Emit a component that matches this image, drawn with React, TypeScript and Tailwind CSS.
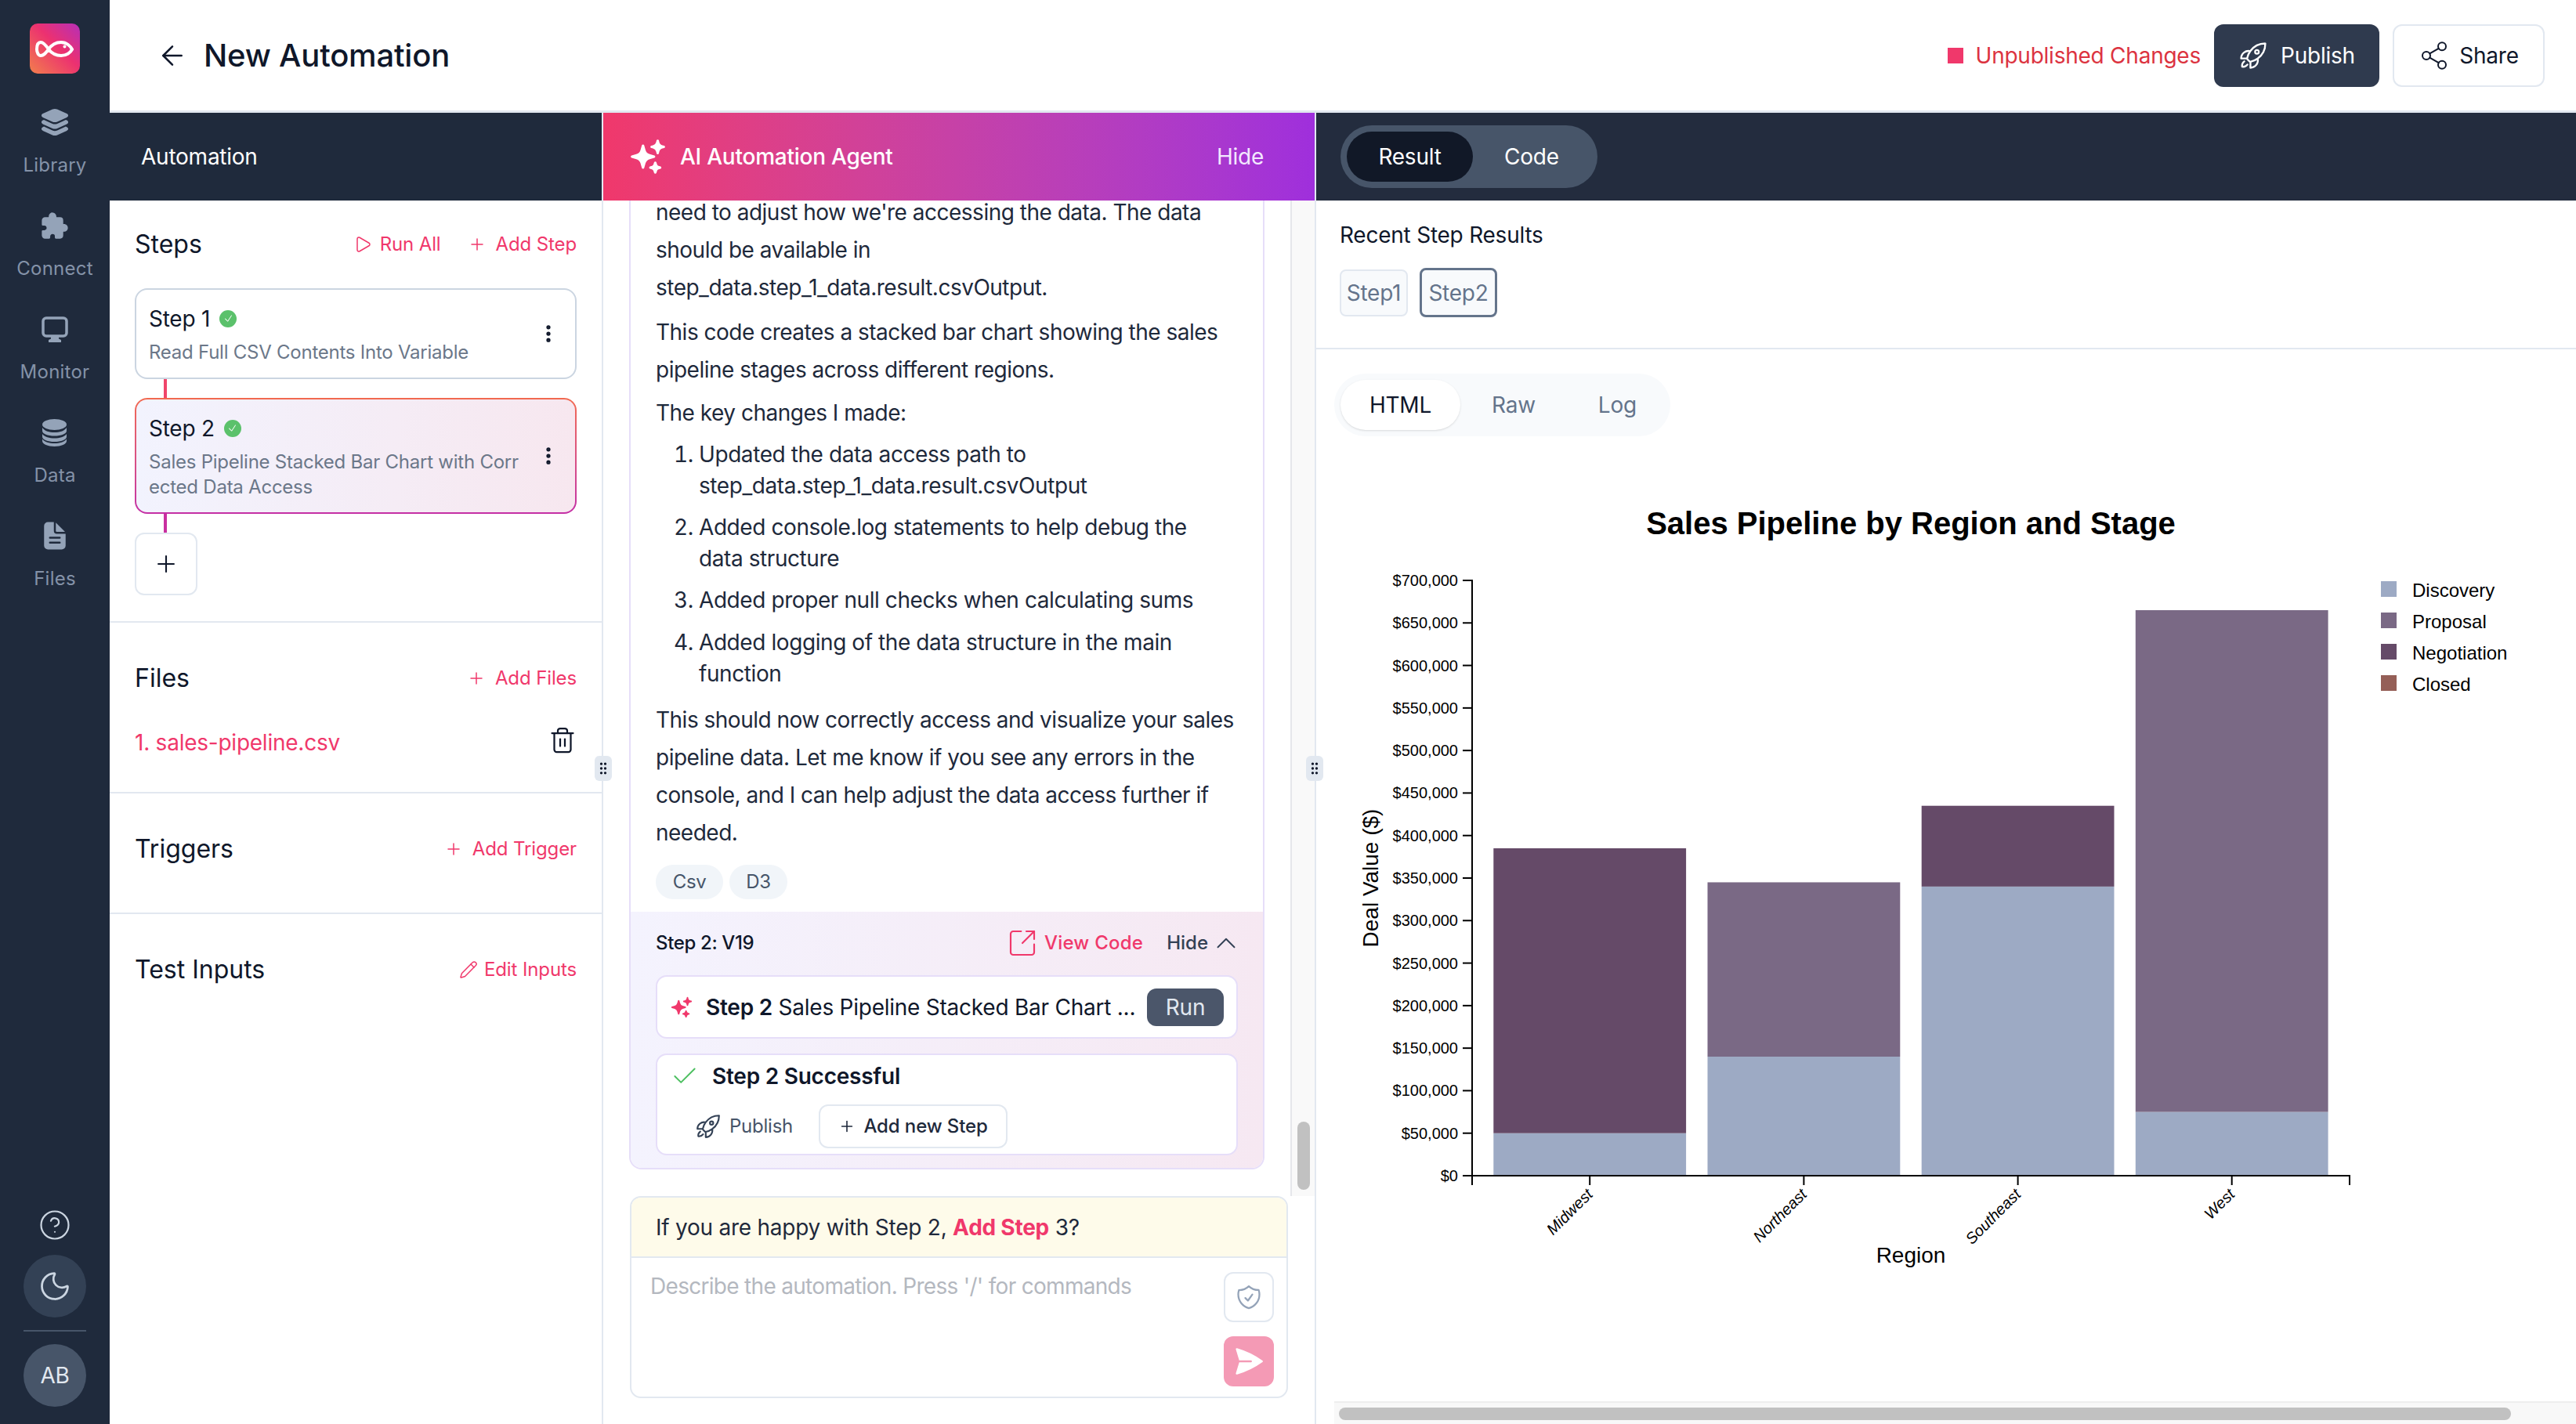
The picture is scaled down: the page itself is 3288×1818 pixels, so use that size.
import React from "react";
import {
  ArrowLeft,
  Check,
  ChevronUp,
  EllipsisVertical,
  GripVertical,
  Moon,
  Pencil,
  Play,
  Plus,
  Share2,
  SquareArrowOutUpRight,
  Trash2,
  CircleHelp,
} from "lucide-react";
import { IoExtensionPuzzle, IoLayers, IoDocumentText } from "react-icons/io5";
import { HiOutlineRocketLaunch, HiOutlineShieldCheck, HiPaperAirplane, HiSparkles, HiCheck } from "react-icons/hi2";

const SANS = "font-['Inter','Noto_Sans',sans-serif] tracking-[-0.015em]";

const Logo = () => (
  <svg width="64" height="64" viewBox="0 0 64 64">
    <defs>
      <linearGradient id="logo" x1="0" y1="1" x2="1" y2="0">
        <stop offset="0" stopColor="#f27f4c" />
        <stop offset="0.55" stopColor="#ec3170" />
        <stop offset="1" stopColor="#b62fb8" />
      </linearGradient>
    </defs>
    <rect width="64" height="64" rx="10" fill="url(#logo)" />
    <path
      d="M24 33C28 27 34 24 40 24C47 24 52 29 54 33C52 37 47 41 40 41C34 41 28 38 24 33C20 27 17 24 14 24C10 24 9 29 9 33C9 37 11 41 14 41C18 41 20 38 24 33Z"
      fill="none"
      stroke="#fff"
      strokeWidth="4"
    />
    <circle cx="44.5" cy="29.5" r="2" fill="#fff" />
  </svg>
);

const MonitorIcon = () => (
  <svg width="34" height="33" viewBox="0 0 34 33" fill="currentColor">
    <rect x="2" y="2" width="30" height="23" rx="4" fill="none" stroke="currentColor" strokeWidth="3.5" />
    <path d="M12 26H22V28.5L25 30V33H9V30L12 28.5Z" />
  </svg>
);

const DataIcon = () => (
  <svg width="31" height="35" viewBox="0 0 31 35" fill="currentColor">
    <ellipse cx="15.5" cy="7" rx="15.5" ry="7" />
    <path d="M0 11C3 15.5 9 17 15.5 17S28 15.5 31 11V15C31 19 24 21.5 15.5 21.5S0 19 0 15Z" />
    <path d="M0 19C3 23 9 24.5 15.5 24.5S28 23 31 19V22.5C31 26.5 24 29 15.5 29S0 26.5 0 22.5Z" />
    <path d="M0 25.5C3 29.5 9 31 15.5 31S28 29.5 31 25.5V28C31 32 24 35 15.5 35S0 32 0 28Z" />
  </svg>
);

const NavItem = ({ icon, label }: { icon: React.ReactNode; label: string }) => (
  <div className="flex flex-col items-center">
    <div className="flex h-[40px] items-center justify-center text-[#94a3b8]">{icon}</div>
    <span className="mt-[19px] text-[24px] leading-[32px] tracking-[0.01em] text-[#8492a8]">{label}</span>
  </div>
);

const Sidebar = () => (
  <aside className="flex w-[140px] shrink-0 flex-col items-center bg-[#1f2a3c] pt-[30px] pb-[22px]">
    <Logo />
    <div className="mt-[42px] flex flex-col items-center gap-[41px]">
      <NavItem icon={<IoLayers size={42} />} label="Library" />
      <NavItem icon={<IoExtensionPuzzle size={38} />} label="Connect" />
      <NavItem icon={<MonitorIcon />} label="Monitor" />
      <NavItem icon={<DataIcon />} label="Data" />
      <NavItem icon={<IoDocumentText size={40} />} label="Files" />
    </div>
    <div className="mt-auto flex flex-col items-center">
      <CircleHelp size={42} strokeWidth={1.25} className="text-[#cbd5e1]" />
      <div className="mt-[17px] flex h-[80px] w-[80px] items-center justify-center rounded-full bg-[#334155]">
        <Moon size={44} strokeWidth={1.5} className="text-[#cbd5e1]" />
      </div>
      <div className="my-[16px] h-[2px] w-[80px] bg-[#475569]" />
      <div className="flex h-[80px] w-[80px] items-center justify-center rounded-full bg-[#475569] text-[28px] text-[#e2e8f0]">
        AB
      </div>
    </div>
  </aside>
);

const Header = () => (
  <header className="flex h-[144px] shrink-0 items-center border-b-[3px] border-[#e2e8f0] bg-white pl-[60px] pr-[40px]">
    <ArrowLeft size={40} strokeWidth={1.5} className="text-[#0f172a]" />
    <h1 className="ml-[20px] text-[40px] font-medium tracking-[-0.005em] text-[#0f172a]">New Automation</h1>
    <div className="ml-auto flex items-center">
      <span className="h-[20px] w-[20px] bg-[#f0386b]" />
      <span className="ml-[16px] text-[28px] text-[#dc3340]">Unpublished Changes</span>
      <button className="ml-[17px] flex h-[80px] w-[211px] items-center justify-center gap-[16px] rounded-[12px] bg-[#2f3a4e] text-[28px] text-white">
        <HiOutlineRocketLaunch size={38} /> Publish
      </button>
      <button className="ml-[17px] flex h-[80px] w-[194px] items-center justify-center gap-[12px] rounded-[12px] border-2 border-[#e2e8f0] bg-white text-[28px] text-[#0f172a]">
        <Share2 size={40} strokeWidth={1.2} /> Share
      </button>
    </div>
  </header>
);

const SectionHead = ({ title, action }: { title: string; action: React.ReactNode }) => (
  <div className="flex items-center justify-between">
    <h3 className="text-[32px] leading-[44px] tracking-normal text-[#0f172a]">{title}</h3>
    <div className="flex items-center text-[24px] tracking-[-0.005em] text-[#f0386b]">{action}</div>
  </div>
);

const GreenCheck = () => (
  <span className="ml-[12px] flex h-[22px] w-[22px] items-center justify-center rounded-full bg-[#5bc16b] text-white">
    <HiCheck size={13} />
  </span>
);

const LeftPanel = () => (
  <section className="flex w-[630px] shrink-0 flex-col border-r-2 border-[#e2e8f0] bg-white">
    <div className="flex h-[112px] shrink-0 items-center bg-[#1f2a3c] pl-[40px] text-[28px] text-white">Automation</div>
    <div className="px-[32px] pt-[34px] pb-[33px]">
      <SectionHead
        title="Steps"
        action={
          <>
            <Play size={24} strokeWidth={1.5} />
            <span className="ml-[10px]">Run All</span>
            <Plus size={24} strokeWidth={1.5} className="ml-[34px]" />
            <span className="ml-[12px]">Add Step</span>
          </>
        }
      />
      <div className="mt-[34px] flex h-[116px] items-center justify-between rounded-[16px] border-2 border-[#cbd5e1] bg-white pl-[16px] pr-[20px]">
        <div>
          <div className="flex items-center text-[28px] leading-[40px] text-[#0f172a]">
            Step 1 <GreenCheck />
          </div>
          <p className="mt-[7px] text-[24px] leading-[32px] text-[#6b7789]">Read Full CSV Contents Into Variable</p>
        </div>
        <EllipsisVertical size={28} strokeWidth={2.5} className="text-[#0f172a]" />
      </div>
      <div className="ml-[37px] h-[24px] w-[4px] bg-[#f0456a]" />
      <div className="rounded-[16px] bg-gradient-to-b from-[#f2694f] to-[#c42fa5] p-[2px]">
        <div className="flex h-[144px] items-center justify-between rounded-[14px] bg-gradient-to-r from-[#f2f3fe] to-[#f7e7ef] pl-[16px] pr-[20px]">
          <div>
            <div className="flex items-center text-[28px] leading-[40px] text-[#0f172a]">
              Step 2 <GreenCheck />
            </div>
            <p className="mt-[7px] text-[24px] leading-[32px] text-[#6b7789]">
              Sales Pipeline Stacked Bar Chart with Corr
              <br />
              ected Data Access
            </p>
          </div>
          <EllipsisVertical size={28} strokeWidth={2.5} className="text-[#0f172a]" />
        </div>
      </div>
      <div className="ml-[37px] h-[24px] w-[4px] bg-[#c92fa0]" />
      <div className="flex h-[80px] w-[80px] items-center justify-center rounded-[12px] border-2 border-[#e2e8f0]">
        <Plus size={34} strokeWidth={1.5} className="text-[#0f172a]" />
      </div>
    </div>
    <div className="h-[218px] border-t-2 border-[#e2e8f0] px-[32px] pt-[49px]">
      <SectionHead
        title="Files"
        action={
          <>
            <Plus size={24} strokeWidth={1.5} />
            <span className="ml-[12px]">Add Files</span>
          </>
        }
      />
      <div className="mt-[39px] flex items-center justify-between">
        <span className="text-[28px] text-[#f0386b]">1. sales-pipeline.csv</span>
        <Trash2 size={36} strokeWidth={1.5} className="-translate-y-[3px] text-[#0f172a]" />
      </div>
    </div>
    <div className="h-[154px] border-t-2 border-[#e2e8f0] px-[32px] pt-[49px]">
      <SectionHead
        title="Triggers"
        action={
          <>
            <Plus size={24} strokeWidth={1.5} />
            <span className="ml-[12px]">Add Trigger</span>
          </>
        }
      />
    </div>
    <div className="flex-1 border-t-2 border-[#e2e8f0] px-[32px] pt-[49px]">
      <SectionHead
        title="Test Inputs"
        action={
          <>
            <Pencil size={24} strokeWidth={1.5} />
            <span className="ml-[8px]">Edit Inputs</span>
          </>
        }
      />
    </div>
  </section>
);

const ChatPanel = () => (
  <section className="flex w-[908px] shrink-0 flex-col bg-white">
    <div className="flex h-[112px] shrink-0 items-center justify-between bg-gradient-to-r from-[#f0386b] to-[#9f2fdc] pl-[32px] pr-[65px] text-white">
      <div className="flex items-center gap-[16px] text-[28px] font-medium">
        <HiSparkles size={50} /> AI Automation Agent
      </div>
      <span className="text-[28px] text-[#f3e8ff]">Hide</span>
    </div>
    <div className="flex min-h-0 flex-1">
      <div className="min-w-0 flex-1 overflow-hidden pl-[33px] pr-[33px]">
        <div className="-mt-[9px] rounded-b-[16px] border-x-2 border-b-2 border-[#e6def9]">
          <div className="pl-[32px] pr-[18px] text-[28px] tracking-[-0.018em] text-[#1e293b]">
            <p className="mb-[9px] leading-[48px]">
              need to adjust how we're accessing the data. The data
              <br />
              should be available in
              <br />
              step_data.step_1_data.result.csvOutput.
            </p>
            <p className="mb-[7px] leading-[48px]">
              This code creates a stacked bar chart showing the sales
              <br />
              pipeline stages across different regions.
            </p>
            <p className="mb-[9px] leading-[48px]">The key changes I made:</p>
            <ol className="mb-[15px] list-decimal pl-[55px] leading-[40px] tracking-[-0.015em]">
              <li className="mb-[13px]">
                Updated the data access path to
                <br />
                step_data.step_1_data.result.csvOutput
              </li>
              <li className="mb-[13px]">
                Added console.log statements to help debug the
                <br />
                data structure
              </li>
              <li className="mb-[14px]">Added proper null checks when calculating sums</li>
              <li>
                Added logging of the data structure in the main
                <br />
                function
              </li>
            </ol>
            <p className="leading-[48px]">
              This should now correctly access and visualize your sales
              <br />
              pipeline data. Let me know if you see any errors in the
              <br />
              console, and I can help adjust the data access further if
              <br />
              needed.
            </p>
            <div className="mt-[17px] flex gap-[8px] pb-[16px] tracking-[-0.015em]">
              <span className="flex h-[44px] w-[86px] items-center justify-center rounded-full bg-[#f1f5f9] text-[24px] text-[#475569]">Csv</span>
              <span className="flex h-[44px] w-[74px] items-center justify-center rounded-full bg-[#f1f5f9] text-[24px] text-[#475569]">D3</span>
            </div>
          </div>
          <div className="rounded-b-[14px] bg-gradient-to-r from-[#f4f3fe] to-[#f6e8f2] px-[32px] pt-[22px] pb-[16px]">
            <div className="flex h-[36px] items-center text-[24px] tracking-normal">
              <span className="font-medium tracking-[-0.015em] text-[#0f172a]">Step 2: V19</span>
              <SquareArrowOutUpRight size={40} strokeWidth={1.3} className="-mr-[2px] ml-auto text-[#f0386b]" />
              <span className="ml-[10px] font-medium tracking-[0.01em] text-[#f0386b]">View Code</span>
              <span className="ml-[30px] font-medium text-[#334155]">Hide</span>
              <ChevronUp size={42} strokeWidth={1.1} className="-mr-[6px] ml-[2px] text-[#334155]" />
            </div>
            <div className="mt-[23px] flex h-[81px] items-center rounded-[14px] border-2 border-[#e6def9] bg-white pl-[16px] pr-[16px]">
              <HiSparkles size={30} className="text-[#f0386b]" />
              <span className="ml-[16px] whitespace-nowrap text-[28px] text-[#0f172a]">
                <span className="font-semibold">Step 2</span> Sales Pipeline Stacked Bar Chart ...
              </span>
              <button className="ml-auto flex h-[48px] w-[98px] items-center justify-center rounded-[12px] bg-[#4b566a] text-[28px] text-[#e2e8f0]">Run</button>
            </div>
            <div className="mt-[19px] h-[130px] rounded-[14px] border-2 border-[#e6def9] bg-white pl-[20px] pt-[8px]">
              <div className="flex items-center text-[28px] font-semibold leading-[36px] text-[#0f172a]">
                <Check size={38} strokeWidth={1.2} className="-ml-[4px] text-[#4bbf5f]" />
                <span className="ml-[16px]">Step 2 Successful</span>
              </div>
              <div className="mt-[17px] flex items-center pl-[28px]">
                <HiOutlineRocketLaunch size={34} className="text-[#334155]" />
                <span className="ml-[10px] text-[24px] text-[#475569]">Publish</span>
                <button className="ml-[33px] flex h-[56px] w-[241px] items-center justify-center gap-[10px] rounded-[12px] border-2 border-[#e2e8f0] text-[24px] font-medium tracking-[-0.005em] text-[#1e293b]">
                  <Plus size={22} strokeWidth={1.75} /> Add new Step
                </button>
              </div>
            </div>
          </div>
        </div>
      </div>
      <div className="flex w-[31px] shrink-0 flex-col items-center justify-end border-l-2 border-[#e5e7eb] bg-[#f9f9f9] pb-[8px]">
        <div className="h-[87px] w-[16px] rounded-full bg-[#c1c1c1]" />
      </div>
    </div>
    <div className="h-[291px] shrink-0 pl-[34px] pr-[34px]">
      <div className="flex h-[258px] flex-col overflow-hidden rounded-[14px] border-2 border-[#e2e8f0]">
        <div className="flex h-[77px] shrink-0 items-center border-b-2 border-[#e2e8f0] bg-[#fefbea] pl-[31px] text-[28px] text-[#1e293b]">
          <span>
            If you are happy with Step 2, <b className="font-bold text-[#f0386b]">Add Step</b> 3?
          </span>
        </div>
        <div className="flex flex-1 justify-between pl-[24px] pr-[16px] pt-[18px]">
          <span className="-mt-[2px] text-[28px] leading-[40px] tracking-[-0.025em] text-[#b4b8bf]">Describe the automation. Press '/' for commands</span>
          <div className="flex flex-col gap-[18px]">
            <div className="flex h-[64px] w-[64px] items-center justify-center rounded-[12px] border-2 border-[#e2e8f0]">
              <HiOutlineShieldCheck size={36} className="text-[#94a3b8]" />
            </div>
            <div className="flex h-[64px] w-[64px] items-center justify-center rounded-[12px] bg-[#f49ab5]">
              <HiPaperAirplane size={42} className="text-white" />
            </div>
          </div>
        </div>
      </div>
    </div>
  </section>
);

const BAR_X = [1906.3, 2179.5, 2452.7, 2725.8];
const y = (v: number) => 1501 - (v / 700000) * 760;
const money = (v: number) => "$" + v.toLocaleString("en-US");
const TICKS = Array.from({ length: 15 }, (_, i) => i * 50000);
const C = { discovery: "#9daac4", proposal: "#7a6985", negotiation: "#654a68", closed: "#955f57" };
const BARS: [number, string, number, number][] = [
  [0, C.discovery, 0, 50000],
  [0, C.negotiation, 50000, 385000],
  [1, C.discovery, 0, 140000],
  [1, C.proposal, 140000, 345000],
  [2, C.discovery, 0, 340000],
  [2, C.negotiation, 340000, 435000],
  [3, C.discovery, 0, 75000],
  [3, C.proposal, 75000, 665000],
];
const LEGEND: [string, string][] = [
  ["Discovery", C.discovery],
  ["Proposal", C.proposal],
  ["Negotiation", C.negotiation],
  ["Closed", C.closed],
];
const REGIONS = ["Midwest", "Northeast", "Southeast", "West"];

const Chart = () => (
  <svg
    className="mt-[43px] shrink-0 tracking-normal"
    width="1608"
    height="1189"
    viewBox="1680 600 1608 1189"
    fontFamily="'Liberation Sans', Arial, sans-serif"
  >
    <text x="2439" y="682" fontSize="40" fontWeight="700" textAnchor="middle" fill="#000">
      Sales Pipeline by Region and Stage
    </text>
    {BARS.map(([i, fill, a, b]) => (
      <rect key={`${i}-${a}`} x={BAR_X[i]} y={y(b)} width={245.8} height={y(a) - y(b)} fill={fill} />
    ))}
    <path d="M1867 741H1879V1501H1867" fill="none" stroke="#000" strokeWidth="2" />
    {TICKS.map((t) => (
      <g key={t}>
        <line x1="1867" x2="1879" y1={y(t)} y2={y(t)} stroke="#000" strokeWidth="2" />
        <text x="1861" y={y(t) + 7} fontSize="20" textAnchor="end" fill="#000">
          {money(t)}
        </text>
      </g>
    ))}
    <path d="M1879 1513V1501H2999V1513" fill="none" stroke="#000" strokeWidth="2" />
    {REGIONS.map((r, i) => {
      const cx = BAR_X[i] + 122.9;
      return (
        <g key={r}>
          <line x1={cx} x2={cx} y1="1501" y2="1513" stroke="#000" strokeWidth="2" />
          <text transform={`translate(${cx + 5} 1526) rotate(-45)`} fontSize="20" fontStyle="italic" textAnchor="end" fill="#000">
            {r}
          </text>
        </g>
      );
    })}
    <text x="2439" y="1612" fontSize="28" textAnchor="middle" fill="#000">
      Region
    </text>
    <text transform="translate(1759 1121) rotate(-90)" fontSize="28" textAnchor="middle" fill="#000">
      Deal Value ($)
    </text>
    {LEGEND.map(([label, fill], i) => (
      <g key={label}>
        <rect x="3039" y={742 + i * 40} width="20" height="20" fill={fill} />
        <text x="3079" y={762 + i * 40} fontSize="24" fill="#000">
          {label}
        </text>
      </g>
    ))}
  </svg>
);

const ResultPanel = () => (
  <section className="flex min-w-0 flex-1 flex-col border-l-2 border-[#e2e8f0] bg-white">
    <div className="flex h-[112px] shrink-0 items-center bg-[#232c3e] pl-[31px]">
      <div className="flex h-[80px] w-[328px] items-center rounded-full bg-[#475569] pl-[8px] text-[28px] text-white">
        <span className="flex h-[64px] w-[161px] items-center justify-center rounded-full bg-[#111827]">Result</span>
        <span className="ml-[40px]">Code</span>
      </div>
    </div>
    <div className="h-[190px] shrink-0 border-b-2 border-[#e2e8f0] pl-[30px] pt-[24px]">
      <p className="text-[28px] leading-[40px] text-[#0f172a]">Recent Step Results</p>
      <div className="mt-[22px] flex items-center gap-[15px] text-[28px] text-[#64748b]">
        <span className="flex h-[60px] w-[87px] items-center justify-center rounded-[8px] border-2 border-[#e2e8f0] bg-[#f8fafc]">Step1</span>
        <span className="flex h-[63px] w-[99px] items-center justify-center rounded-[8px] border-[3px] border-[#64748b] bg-[#f8fafc]">Step2</span>
      </div>
    </div>
    <div className="ml-[23px] mt-[31px] flex h-[80px] w-[429px] shrink-0 items-center rounded-full bg-[#f8fafc] pl-[8px] text-[28px] text-[#64748b]">
      <span className="flex h-[64px] w-[153px] items-center justify-center rounded-full bg-white text-[#0f172a] shadow-sm">HTML</span>
      <span className="ml-[40px]">Raw</span>
      <span className="ml-[80px]">Log</span>
    </div>
    <Chart />
    <div className="ml-[23px] flex h-[29px] flex-1 items-center border-t-2 border-[#eeeeee] bg-[#f8f8f8] pl-[6px]">
      <div className="h-[16px] w-[1496px] rounded-full bg-[#c1c1c1]" />
    </div>
  </section>
);

const Handle = ({ className }: { className: string }) => (
  <div className={`absolute top-[965px] flex h-[32px] w-[22px] items-center justify-center rounded-[6px] bg-[#e2e8f0] ${className}`}>
    <GripVertical size={20} className="text-[#0f172a]" />
  </div>
);

export default function App() {
  return (
    <div className={`relative flex h-[1818px] w-[3288px] overflow-hidden bg-white ${SANS}`}>
      <Sidebar />
      <div className="flex min-w-0 flex-1 flex-col">
        <Header />
        <div className="flex min-h-0 flex-1">
          <LeftPanel />
          <ChatPanel />
          <ResultPanel />
        </div>
      </div>
      <Handle className="left-[759px]" />
      <Handle className="left-[1667px]" />
    </div>
  );
}
